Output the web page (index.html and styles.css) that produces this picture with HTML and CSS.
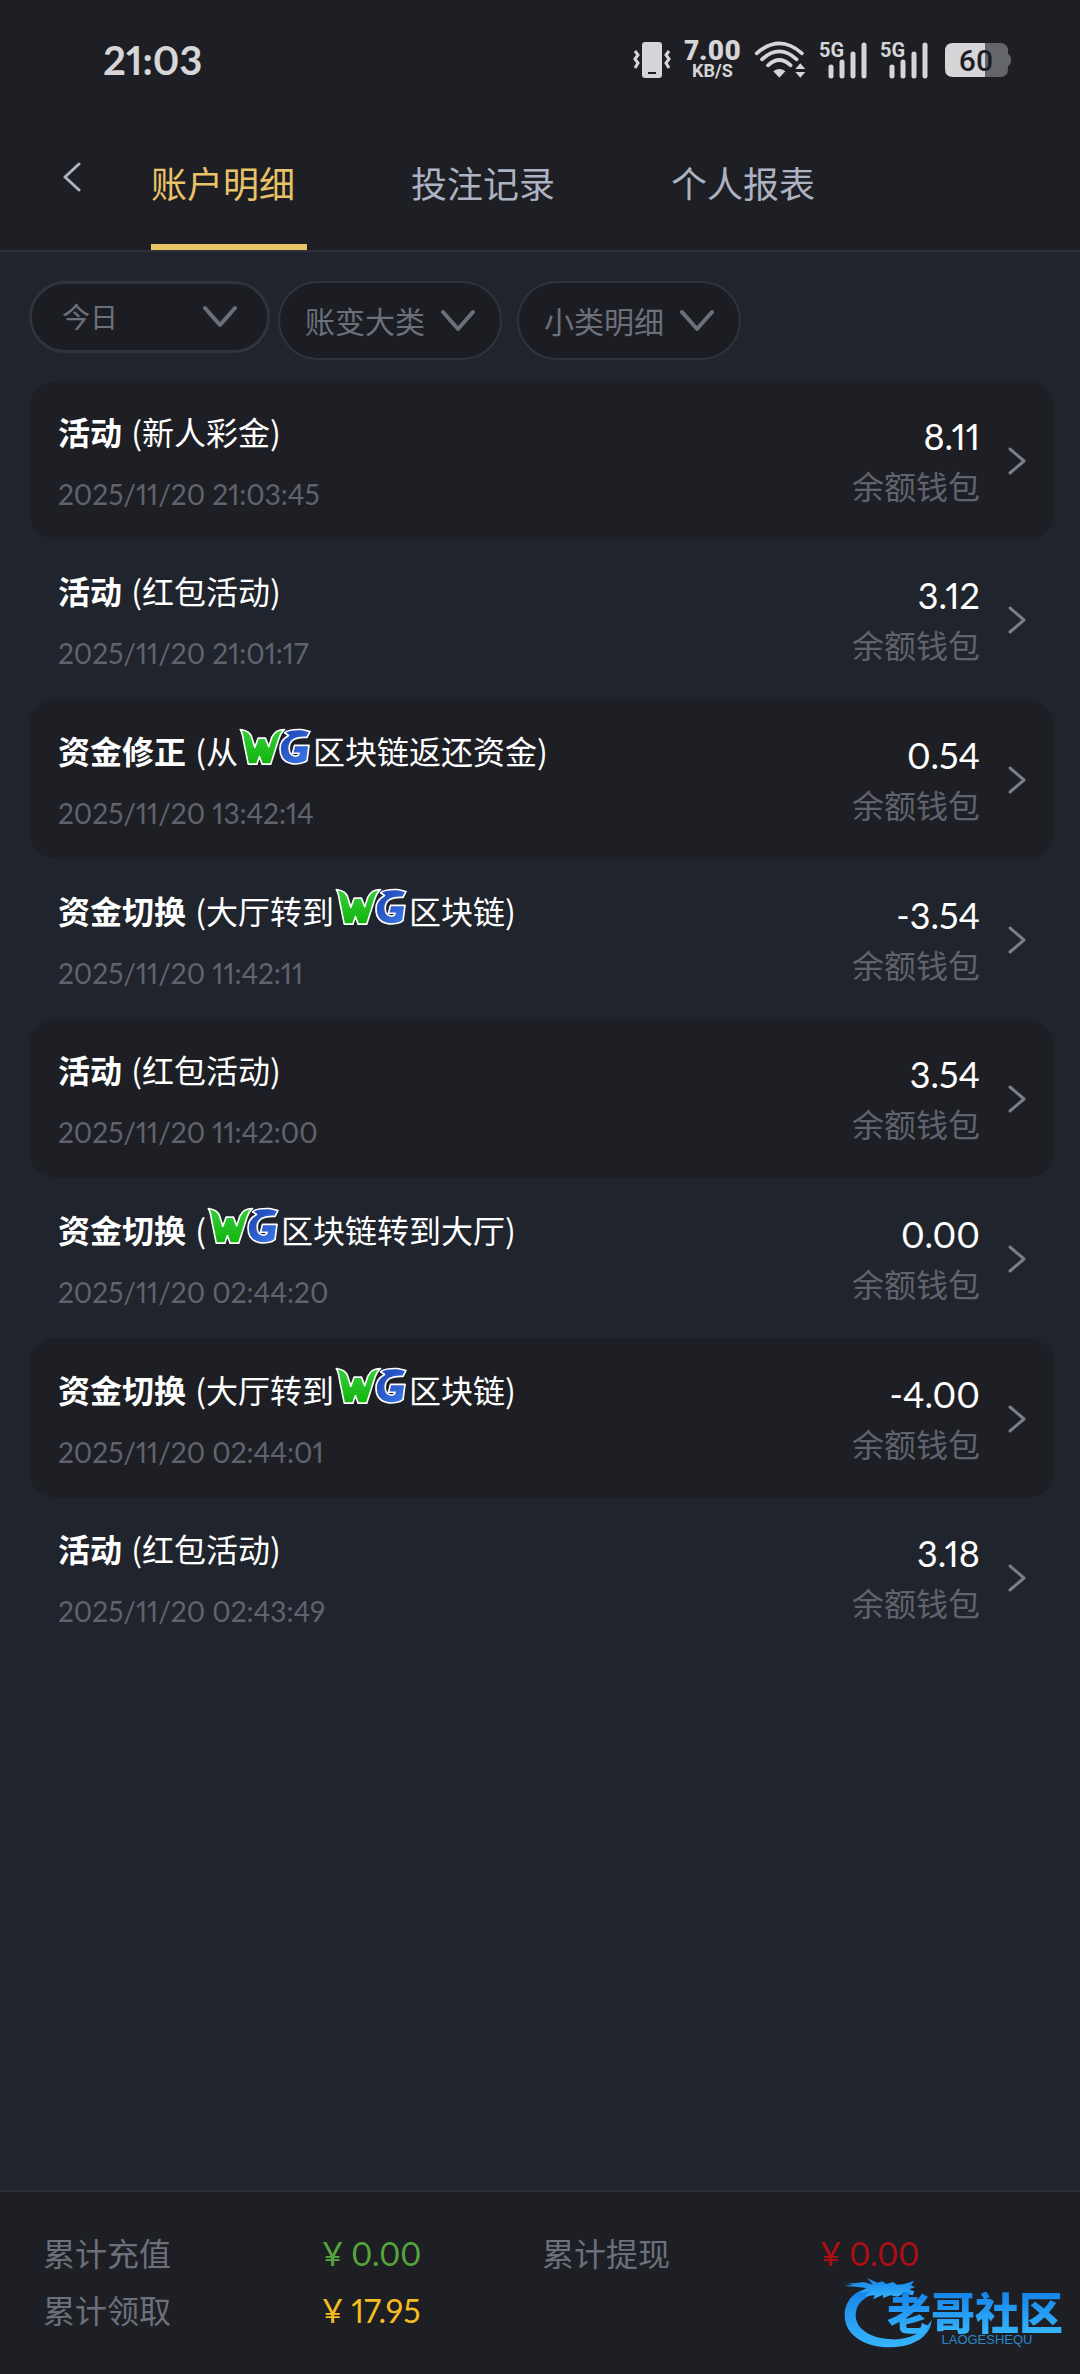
FILE: index.html
```html
<!DOCTYPE html>
<html lang="zh-CN">
<head>
    <meta charset="UTF-8">
    <meta name="viewport" content="width=device-width, initial-scale=1">
    <title>账户明细</title>
    <link rel="stylesheet" href="styles.css">
</head>
<body>
<!-- 公用图标 -->
<svg class="defs" width="0" height="0" aria-hidden="true">
    <defs>
        <linearGradient id="green" x1="0" y1="0" x2="0" y2="1">
            <stop offset="0" stop-color="#35cf3c"/>
            <stop offset="1" stop-color="#12b30c"/>
        </linearGradient>
        <linearGradient id="blue" x1="0" y1="0" x2="1" y2="1">
            <stop offset="0" stop-color="#1b3fae"/>
            <stop offset="1" stop-color="#3f7bea"/>
        </linearGradient>
        <linearGradient id="sky" x1="0" y1="0" x2="0" y2="1">
            <stop offset="0" stop-color="#1583ea"/>
            <stop offset="1" stop-color="#35b6fb"/>
        </linearGradient>
    </defs>
    <symbol id="down" viewBox="0 0 34 24">
        <path d="M2 3 17 20 32 3" fill="none" stroke="currentColor" stroke-width="4" stroke-linecap="round" stroke-linejoin="round"/>
    </symbol>
    <symbol id="right" viewBox="0 0 18 28">
        <path d="M2 2 16 14 2 26" fill="none" stroke="currentColor" stroke-width="3" stroke-linecap="round" stroke-linejoin="round"/>
    </symbol>
    <symbol id="wg" viewBox="0 0 218 114">
        <path d="M4 4C20 6 34 14 38 26L48 58 58 30H80L90 56 99 28C106 12 118 4 138 4C128 12 124 22 120 34L96 109H70L62 86 54 109H28L14 40C12 24 10 14 4 4Z" fill="url(#green)" stroke="#fff" stroke-width="5" stroke-linejoin="round"/>
        <path d="M138 14C150 2 176 4 190 4L215 10 206 28C174 26 152 34 152 60C152 88 180 90 182 76H162L168 52H212L206 98C186 114 124 118 124 62C124 42 136 30 150 22Z" fill="url(#blue)" stroke="#fff" stroke-width="5" stroke-linejoin="round"/>
    </symbol>
</svg>

<div class="page">
    <!-- 状态栏 -->
    <div class="status">
        <span class="time">21:03</span>
        <div class="status-icons">
            <svg width="38" height="38" viewBox="0 0 38 38" fill="currentColor">
                <path d="M12 1H26Q29 1 29 4V34Q29 37 26 37H12Q9 37 9 34V4Q9 1 12 1ZM15 31V33H23V31Z" fill-rule="evenodd"/>
                <path d="M2 10 5 14 2 18 5 22 2 27M36 10 33 14 36 18 33 22 36 27" fill="none" stroke="currentColor" stroke-width="3"/>
            </svg>
            <div class="speed"><b>7.00</b><span>KB/S</span></div>
            <svg width="52" height="40" viewBox="0 0 156 120" fill="currentColor">
                <path d="M8 40Q76-20 144 40M24 58Q76 10 128 58M42 76Q76 44 110 76" fill="none" stroke="currentColor" stroke-width="11" stroke-linecap="round"/>
                <path d="M58 94Q76 80 94 94L76 113Z"/>
                <path d="M139 70 154 87H124ZM124 96H154L139 113Z"/>
            </svg>
            <svg width="48" height="50" viewBox="0 -6 48 50">
                <text x="0" y="16" font-size="20" font-weight="700" fill="currentColor">5G</text>
                <path d="M12 26V35M23 21V35M34 13V35M45 4V35" fill="none" stroke="currentColor" stroke-width="5" stroke-linecap="round"/>
            </svg>
            <svg width="48" height="50" viewBox="0 -6 48 50">
                <text x="0" y="16" font-size="20" font-weight="700" fill="currentColor">5G</text>
                <path d="M12 26V35M23 21V35M34 13V35M45 4V35" fill="none" stroke="currentColor" stroke-width="5" stroke-linecap="round"/>
            </svg>
            <svg class="battery" width="66" height="36" viewBox="0 0 66 36">
                <path d="M40 1H55Q63 1 63 9V12Q66 13 66 18T63 24V27Q63 35 55 35H40Z" fill="#65666a"/>
                <path d="M8 1H40V35H8Q0 35 0 27V9Q0 1 8 1Z" fill="#d6d6d8"/>
                <text x="31" y="29" font-size="30" font-weight="500" text-anchor="middle" fill="#1e1f24">60</text>
            </svg>
        </div>
    </div>

    <!-- 顶部导航 -->
    <header class="header">
        <button class="back" type="button" aria-label="返回">
            <svg width="20" height="30" viewBox="0 0 20 30"><path d="M17 2 3 15 17 28" fill="none" stroke="currentColor" stroke-width="3" stroke-linecap="round" stroke-linejoin="round"/></svg>
        </button>
        <nav class="tabs">
            <a class="active" href="#">账户明细</a>
            <a href="#">投注记录</a>
            <a href="#">个人报表</a>
        </nav>
    </header>

    <main class="main">
        <!-- 筛选 -->
        <div class="filters">
            <div class="filter date">
                <select aria-label="日期"><option>今日</option></select>
                <svg width="34" height="24"><use href="#down"/></svg>
            </div>
            <div class="types">
                <div class="filter">
                    <select aria-label="账变大类"><option>账变大类</option></select>
                    <svg width="34" height="24"><use href="#down"/></svg>
                </div>
                <div class="filter">
                    <select aria-label="小类明细"><option>小类明细</option></select>
                    <svg width="34" height="24"><use href="#down"/></svg>
                </div>
            </div>
        </div>

        <!-- 账变列表 -->
        <div class="list">
            <a class="item" href="#">
                <div class="info">
                    <p class="title"><b>活动</b> (新人彩金)</p>
                    <p class="date-text">2025/11/20 21:03:45</p>
                </div>
                <div class="money"><p class="num">8.11</p><p class="wallet">余额钱包</p></div>
                <svg class="arrow" width="18" height="28"><use href="#right"/></svg>
            </a>
            <a class="item" href="#">
                <div class="info">
                    <p class="title"><b>活动</b> (红包活动)</p>
                    <p class="date-text">2025/11/20 21:01:17</p>
                </div>
                <div class="money"><p class="num">3.12</p><p class="wallet">余额钱包</p></div>
                <svg class="arrow" width="18" height="28"><use href="#right"/></svg>
            </a>
            <a class="item" href="#">
                <div class="info">
                    <p class="title has-logo"><b>资金修正</b> (从<svg class="wg" width="72" height="38"><use href="#wg"/></svg>区块链返还资金)</p>
                    <p class="date-text">2025/11/20 13:42:14</p>
                </div>
                <div class="money"><p class="num">0.54</p><p class="wallet">余额钱包</p></div>
                <svg class="arrow" width="18" height="28"><use href="#right"/></svg>
            </a>
            <a class="item" href="#">
                <div class="info">
                    <p class="title has-logo"><b>资金切换</b> (大厅转到<svg class="wg" width="72" height="38"><use href="#wg"/></svg>区块链)</p>
                    <p class="date-text">2025/11/20 11:42:11</p>
                </div>
                <div class="money"><p class="num">-3.54</p><p class="wallet">余额钱包</p></div>
                <svg class="arrow" width="18" height="28"><use href="#right"/></svg>
            </a>
            <a class="item" href="#">
                <div class="info">
                    <p class="title"><b>活动</b> (红包活动)</p>
                    <p class="date-text">2025/11/20 11:42:00</p>
                </div>
                <div class="money"><p class="num">3.54</p><p class="wallet">余额钱包</p></div>
                <svg class="arrow" width="18" height="28"><use href="#right"/></svg>
            </a>
            <a class="item" href="#">
                <div class="info">
                    <p class="title has-logo"><b>资金切换</b> (<svg class="wg" width="72" height="38"><use href="#wg"/></svg>区块链转到大厅)</p>
                    <p class="date-text">2025/11/20 02:44:20</p>
                </div>
                <div class="money"><p class="num">0.00</p><p class="wallet">余额钱包</p></div>
                <svg class="arrow" width="18" height="28"><use href="#right"/></svg>
            </a>
            <a class="item" href="#">
                <div class="info">
                    <p class="title has-logo"><b>资金切换</b> (大厅转到<svg class="wg" width="72" height="38"><use href="#wg"/></svg>区块链)</p>
                    <p class="date-text">2025/11/20 02:44:01</p>
                </div>
                <div class="money"><p class="num">-4.00</p><p class="wallet">余额钱包</p></div>
                <svg class="arrow" width="18" height="28"><use href="#right"/></svg>
            </a>
            <a class="item" href="#">
                <div class="info">
                    <p class="title"><b>活动</b> (红包活动)</p>
                    <p class="date-text">2025/11/20 02:43:49</p>
                </div>
                <div class="money"><p class="num">3.18</p><p class="wallet">余额钱包</p></div>
                <svg class="arrow" width="18" height="28"><use href="#right"/></svg>
            </a>
        </div>
    </main>

    <!-- 底部统计 -->
    <footer class="footer">
        <dl class="totals">
            <dt>累计充值</dt>
            <dd class="in">¥ 0.00</dd>
            <dt>累计提现</dt>
            <dd class="out">¥ 0.00</dd>
            <dt>累计领取</dt>
            <dd class="got">¥ 17.95</dd>
        </dl>
        <div class="brand">
            <svg width="90" height="70" viewBox="0 0 270 210" fill="url(#sky)">
                <path d="M90 30C36 32 5 68 5 112C5 172 66 210 145 208C215 206 262 174 266 126C242 164 196 186 148 184C84 182 38 154 38 112C38 78 62 56 102 46Z"/>
                <path d="M0 12C22 20 42 14 62 12L90 20 72 0 104 14 118 10 130 18 150 12 162 20 184 18 214 8 204 22 216 28 198 34 214 40 210 52 182 46 164 56 142 52 120 60 120 50 90 64 96 52 66 54 82 40 50 44 70 30 40 26 4 24 30 20Z"/>
            </svg>
            <div class="brand-text">
                <strong>老哥社区</strong>
                <small>LAOGESHEQU</small>
            </div>
        </div>
    </footer>
</div>
</body>
</html>
```

FILE: styles.css
```css
* {
    box-sizing: border-box;
}
body {
    margin: 0;
    background-color: #20242c;
    font-family: Lato, "Noto Sans CJK SC", sans-serif;
    font-variant-numeric: proportional-nums;
    color: #fff;
}
p, dl, dd {
    margin: 0;
}
a {
    color: inherit;
    text-decoration: none;
}
svg {
    display: block;
    flex: none;
}
.defs {
    position: absolute;
}
.page {
    display: flex;
    flex-direction: column;
    min-height: 100vh;
}

/* 状态栏 */
.status {
    display: flex;
    align-items: center;
    justify-content: space-between;
    height: 120px;
    padding: 0 69px 0 103px;
    background-color: #1e1f24;
    color: #d6d6d8;
}
.time {
    font-size: 40px;
    font-weight: 700;
}
.status-icons {
    display: flex;
    align-items: center;
    gap: 13px;
    font-family: Roboto, sans-serif;
}
.battery {
    margin-left: 4px;
}
.speed {
    display: flex;
    flex-direction: column;
    align-items: center;
    font-weight: 700;
}
.speed b {
    font-size: 28px;
    line-height: 22px;
}
.speed span {
    font-size: 18px;
    line-height: 18px;
}

/* 导航 */
.header {
    display: flex;
    height: 132px;
    border-bottom: 2px solid #30323a;
    background-color: #1e1f24;
    color: #adb3c2;
}
.back {
    width: 151px;
    height: 114px;
    padding: 0 0 0 62px;
    border: none;
    background: none;
    color: inherit;
}
.tabs {
    display: flex;
    gap: 104px;
}
.tabs a {
    width: 156px;
    border-bottom: 6px solid transparent;
    font-size: 36px;
    line-height: 128px;
    white-space: nowrap;
}
.tabs .active {
    border-color: #e9c367;
    color: #e9c367;
}

/* 筛选 */
.main {
    flex: 1;
    padding: 29px 25px 29px 29px;
}
.filters {
    display: flex;
    align-items: flex-start;
    gap: 8px;
    margin-bottom: 21px;
}
.types {
    display: flex;
    gap: 15px;
}
.filter {
    display: flex;
    align-items: center;
    width: 224px;
    height: 79px;
    padding: 0 25px;
    border: 2px solid #2f333c;
    border-radius: 40px;
    background-color: #1c1d22;
    color: #6c707b;
}
.filter select {
    flex: 1;
    min-width: 0;
    padding: 0;
    border: none;
    outline: none;
    appearance: none;
    background: none;
    color: inherit;
    font: inherit;
    font-size: 30px;
}
.date {
    width: 241px;
    height: 72px;
    padding: 0 30px;
    border-width: 3px;
}
.date select {
    font-size: 28px;
}

/* 列表 */
.item {
    display: flex;
    align-items: center;
    padding: 29px 29px 28px;
    border-radius: 28px;
}
.item:nth-child(odd) {
    background-color: #1e1f24;
}
.info {
    flex: 1;
}
.title {
    display: flex;
    align-items: center;
    height: 42px;
    margin-bottom: 24px;
    font-family: "Noto Sans CJK SC", sans-serif;
    font-size: 32px;
    line-height: 42px;
    white-space: pre;
}
.title b {
    margin-right: 2px;
}
.has-logo {
    height: 43px;
}
.wg {
    margin: 0 2px 6px 1px;
}
.date-text {
    font-size: 28px;
    line-height: 36px;
    color: #60636d;
}
.money {
    margin-right: 28px;
    text-align: right;
}
.num {
    font-size: 36px;
    line-height: 52px;
}
.wallet {
    font-size: 32px;
    line-height: 50px;
    color: #60636d;
}
.arrow {
    color: #7c7f89;
}

/* 底部 */
.footer {
    position: relative;
    padding: 33px 43px 35px;
    border-top: 2px solid #2b2e3a;
    background-color: #1e1f24;
}
.totals {
    display: grid;
    grid-template-columns: 279fr 220fr 278fr 217fr;
    font-size: 32px;
    line-height: 57px;
}
.totals dt {
    color: #6c707b;
}
.in {
    color: #56a53c;
}
.out {
    color: #b00d14;
}
.got {
    color: #f5bd1f;
}
.brand {
    position: absolute;
    right: 17px;
    bottom: 26px;
    display: flex;
    align-items: flex-end;
}
.brand-text {
    display: flex;
    flex-direction: column;
    align-items: center;
    margin: 0 0 2px -46px;
}
.brand strong {
    background: linear-gradient(#1583ea, #35b6fb);
    background-clip: text;
    -webkit-background-clip: text;
    color: transparent;
    font-size: 44px;
    font-weight: 900;
    line-height: 42px;
}
.brand small {
    margin-left: 24px;
    color: #2b86c9;
    font-family: "Liberation Sans", sans-serif;
    font-size: 13px;
    line-height: 12px;
}
```
